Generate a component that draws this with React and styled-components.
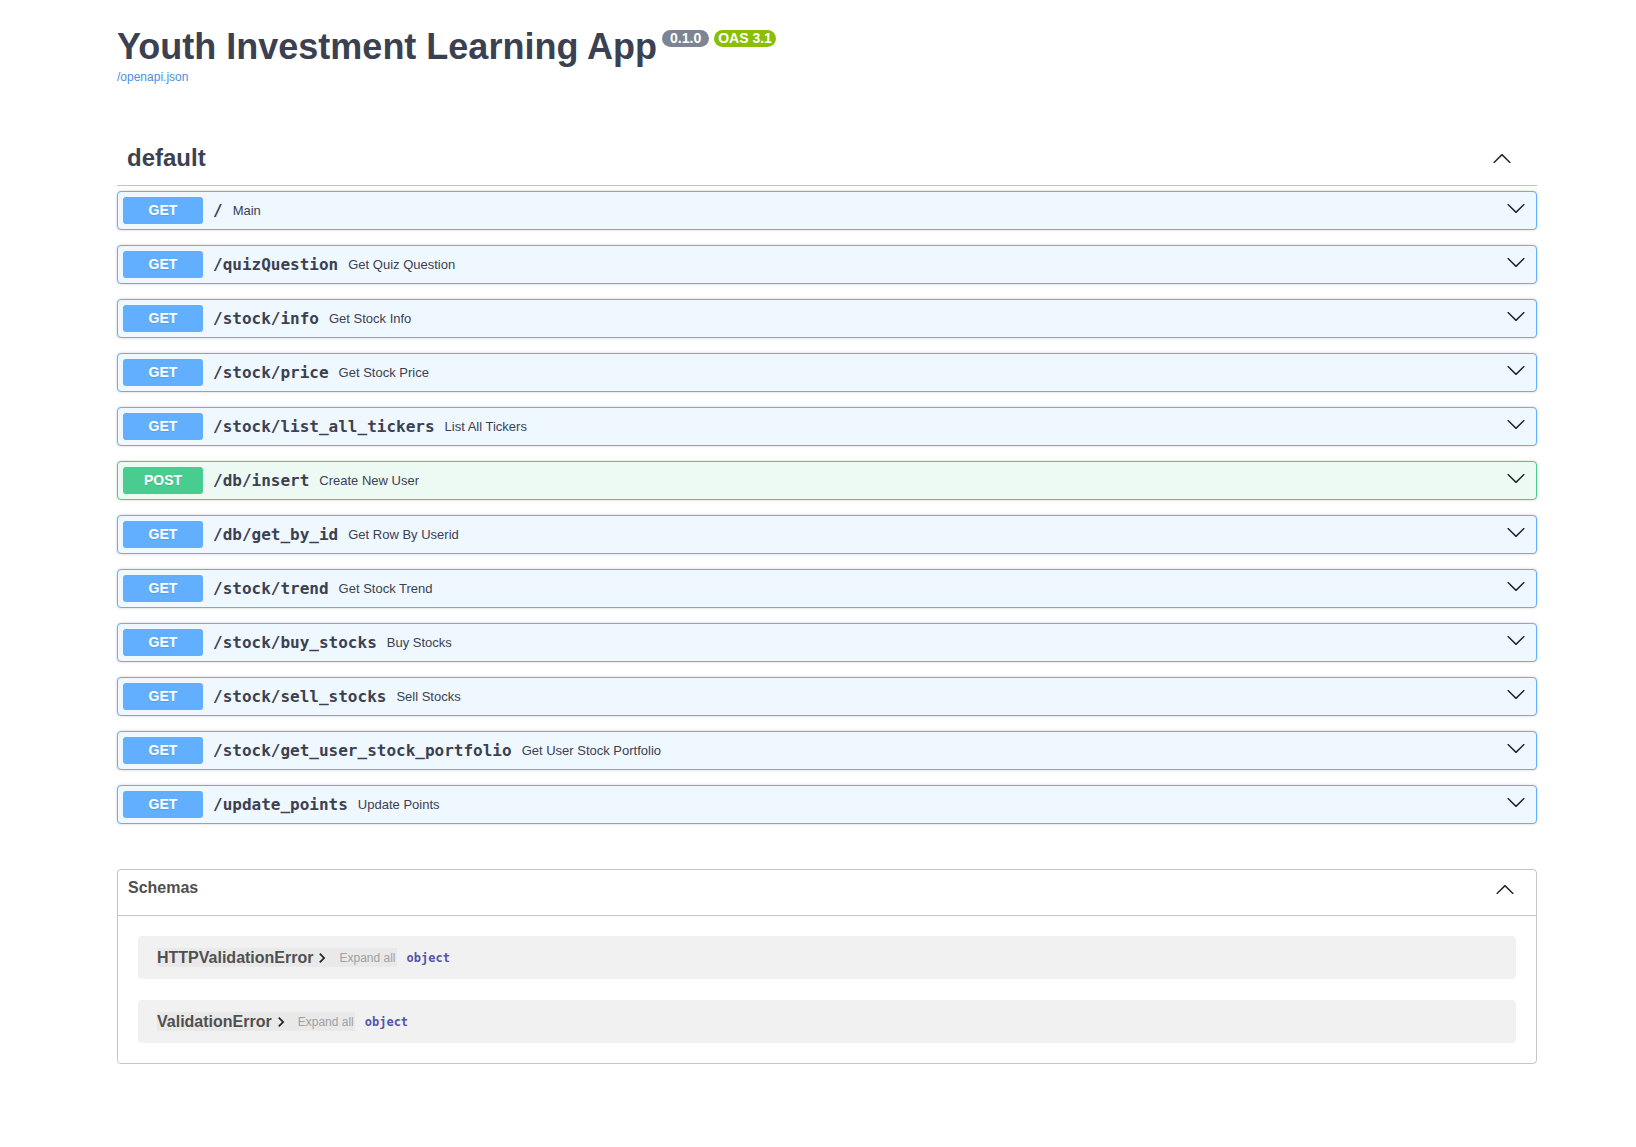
import React from 'react'
import styled, { createGlobalStyle } from 'styled-components'

const GlobalStyle = createGlobalStyle`
  body {
    margin: 0;
    background: #fff;
    color: #3b4151;
    font-family: "Liberation Sans", Arial, sans-serif;
  }
`

const METHOD_COLORS = {
  GET: { main: '#61affe', bg: '#eff7ff' },
  POST: { main: '#49cc90', bg: '#edfaf3' },
}

const operations = [
  { method: 'GET', path: '/', summary: 'Main' },
  { method: 'GET', path: '/quizQuestion', summary: 'Get Quiz Question' },
  { method: 'GET', path: '/stock/info', summary: 'Get Stock Info' },
  { method: 'GET', path: '/stock/price', summary: 'Get Stock Price' },
  { method: 'GET', path: '/stock/list_all_tickers', summary: 'List All Tickers' },
  { method: 'POST', path: '/db/insert', summary: 'Create New User' },
  { method: 'GET', path: '/db/get_by_id', summary: 'Get Row By Userid' },
  { method: 'GET', path: '/stock/trend', summary: 'Get Stock Trend' },
  { method: 'GET', path: '/stock/buy_stocks', summary: 'Buy Stocks' },
  { method: 'GET', path: '/stock/sell_stocks', summary: 'Sell Stocks' },
  { method: 'GET', path: '/stock/get_user_stock_portfolio', summary: 'Get User Stock Portfolio' },
  { method: 'GET', path: '/update_points', summary: 'Update Points' },
]

const schemas = ['HTTPValidationError', 'ValidationError']

// swagger style chevrons
const ArrowDown = () => (
  <svg width="20" height="20" viewBox="0 0 20 20" fill="#222">
    <path d="M17.418 6.109c.272-.268.709-.268.979 0s.271.701 0 .969l-7.908 7.83c-.27.268-.707.268-.979 0l-7.908-7.830c-.27-.268-.27-.701 0-.969.271-.268.709-.268.98 0L10 13.25l7.418-7.141z" />
  </svg>
)

const ArrowUp = () => (
  <svg width="20" height="20" viewBox="0 0 20 20" fill="#222">
    <path d="M17.418 14.908c.272.268.709.268.979 0s.271-.701 0-.969l-7.908-7.83c-.27-.268-.707-.268-.979 0l-7.908 7.83c-.27.268-.27.701 0 .969.271.268.709.268.98 0L10 7.767l7.418 7.141z" />
  </svg>
)

const ChevronRight = () => (
  <ToggleIcon width="20" height="20" viewBox="0 0 24 24" fill="#222">
    <path d="M10 6L8.59 7.41 13.17 12l-4.58 4.59L10 18l6-6z" />
  </ToggleIcon>
)

function Operation({ method, path, summary }) {
  return (
    <OpBlock method={method}>
      <MethodBadge method={method}>{method}</MethodBadge>
      <OpPath>{path}</OpPath>
      <OpSummary>{summary}</OpSummary>
      <OpArrow>
        <ArrowDown />
      </OpArrow>
    </OpBlock>
  )
}

function SchemaRow({ name }) {
  return (
    <ModelRow>
      <ModelTitle>
        {name}
        <ChevronRight />
      </ModelTitle>
      <ExpandAll>Expand all</ExpandAll>
      <PropType>object</PropType>
    </ModelRow>
  )
}

export default function App() {
  return (
    <>
      <GlobalStyle />
      <Page>
        <Info>
          <Title>
            Youth Investment Learning App
            <Badge>0.1.0</Badge>
            <Badge oas>OAS 3.1</Badge>
          </Title>
          <SpecLink href="#">/openapi.json</SpecLink>
        </Info>

        <TagSection>
          <TagHeader>
            <TagName>default</TagName>
            <ArrowUp />
          </TagHeader>
          <OpList>
            {operations.map(op => (
              <Operation key={op.path} {...op} />
            ))}
          </OpList>
        </TagSection>

        <Models>
          <ModelsHeader>
            <span>Schemas</span>
            <ArrowUp />
          </ModelsHeader>
          <ModelsBody>
            {schemas.map(s => (
              <SchemaRow key={s} name={s} />
            ))}
          </ModelsBody>
        </Models>
      </Page>
    </>
  )
}

const Page = styled.div`
  width: 1420px;
  margin-left: 117px;
  padding: 26px 0 60px;
`

const Info = styled.div`
  display: flex;
  flex-direction: column;
  align-items: flex-start;
`

const Title = styled.h2`
  margin: 0;
  display: flex;
  align-items: flex-start;
  font-size: 36px;
  line-height: 41px;
  font-weight: 700;
  color: #3b4151;
`

const Badge = styled.small`
  margin: 4px 0 0 5px;
  padding: 1px ${props => (props.oas ? '4px' : '8px')};
  border-radius: 57px;
  background: ${props => (props.oas ? '#89bf04' : '#7d8492')};
  color: #fff;
  font-size: 14px;
  font-weight: 700;
  line-height: 15px;
`

const SpecLink = styled.a`
  margin-top: 3px;
  font-size: 12px;
  line-height: 14px;
  color: #4990e2;
  text-decoration: none;
`

const TagSection = styled.section`
  margin-top: 47px;
`

const TagHeader = styled.div`
  display: flex;
  align-items: center;
  justify-content: space-between;
  min-height: 34px;
  padding: 10px 25px 10px 10px;
  margin-bottom: 5px;
  border-bottom: 1px solid rgba(59, 65, 81, 0.3);
`

const TagName = styled.h3`
  margin: 0;
  font-size: 24px;
  line-height: 28px;
  font-weight: 700;
  color: #3b4151;
`

const OpList = styled.div`
  display: flex;
  flex-direction: column;
`

const OpBlock = styled.div`
  display: flex;
  align-items: center;
  padding: 5px;
  margin-bottom: 15px;
  border: 1px solid ${props => METHOD_COLORS[props.method].main};
  border-radius: 4px;
  background: ${props => METHOD_COLORS[props.method].bg};
  box-shadow: 0 0 3px rgba(0, 0, 0, 0.19);
`

const MethodBadge = styled.span`
  min-width: 80px;
  padding: 6px 0;
  border-radius: 3px;
  background: ${props => METHOD_COLORS[props.method].main};
  color: #fff;
  font-size: 14px;
  font-weight: 700;
  line-height: 15px;
  text-align: center;
  text-shadow: 0 1px 0 rgba(0, 0, 0, 0.1);
`

const OpPath = styled.span`
  padding: 0 10px;
  font-family: "DejaVu Sans Mono", "Liberation Mono", monospace;
  font-size: 16px;
  font-weight: 700;
  color: #3b4151;
`

const OpSummary = styled.span`
  flex: 1;
  font-size: 13px;
  color: #3b4151;
`

const OpArrow = styled.span`
  display: flex;
  margin: 0 5px 5px 0;
`

const Models = styled.section`
  margin-top: 30px;
  border: 1px solid rgba(59, 65, 81, 0.3);
  border-radius: 4px;
`

const ModelsHeader = styled.h4`
  box-sizing: border-box;
  height: 46px;
  margin: 0;
  padding: 9px 21px 0 10px;
  display: flex;
  align-items: flex-start;
  justify-content: space-between;
  border-bottom: 1px solid rgba(59, 65, 81, 0.3);
  font-size: 16px;
  font-weight: 700;
  color: #505050;
`

const ModelsBody = styled.div`
  display: flex;
  flex-direction: column;
  gap: 21px;
  padding: 20px;
`

const ModelRow = styled.div`
  display: flex;
  align-items: center;
  height: 43px;
  padding: 0 19px;
  border-radius: 4px;
  background: #f1f1f1;
`

const ModelTitle = styled.span`
  display: flex;
  align-items: center;
  height: 19px;
  padding-right: 2px;
  background: rgba(0, 0, 0, 0.03);
  font-size: 16px;
  font-weight: 700;
  color: #505050;
`

const ToggleIcon = styled.svg`
  margin-left: -1px;
`

const ExpandAll = styled.span`
  display: flex;
  align-items: center;
  height: 19px;
  padding: 0 1px 0 5px;
  background: rgba(0, 0, 0, 0.03);
  font-size: 12px;
  color: #a0a0a0;
`

const PropType = styled.span`
  margin-left: 10px;
  font-family: "DejaVu Sans Mono", "Liberation Mono", monospace;
  font-size: 12px;
  font-weight: 700;
  color: #55a;
`
